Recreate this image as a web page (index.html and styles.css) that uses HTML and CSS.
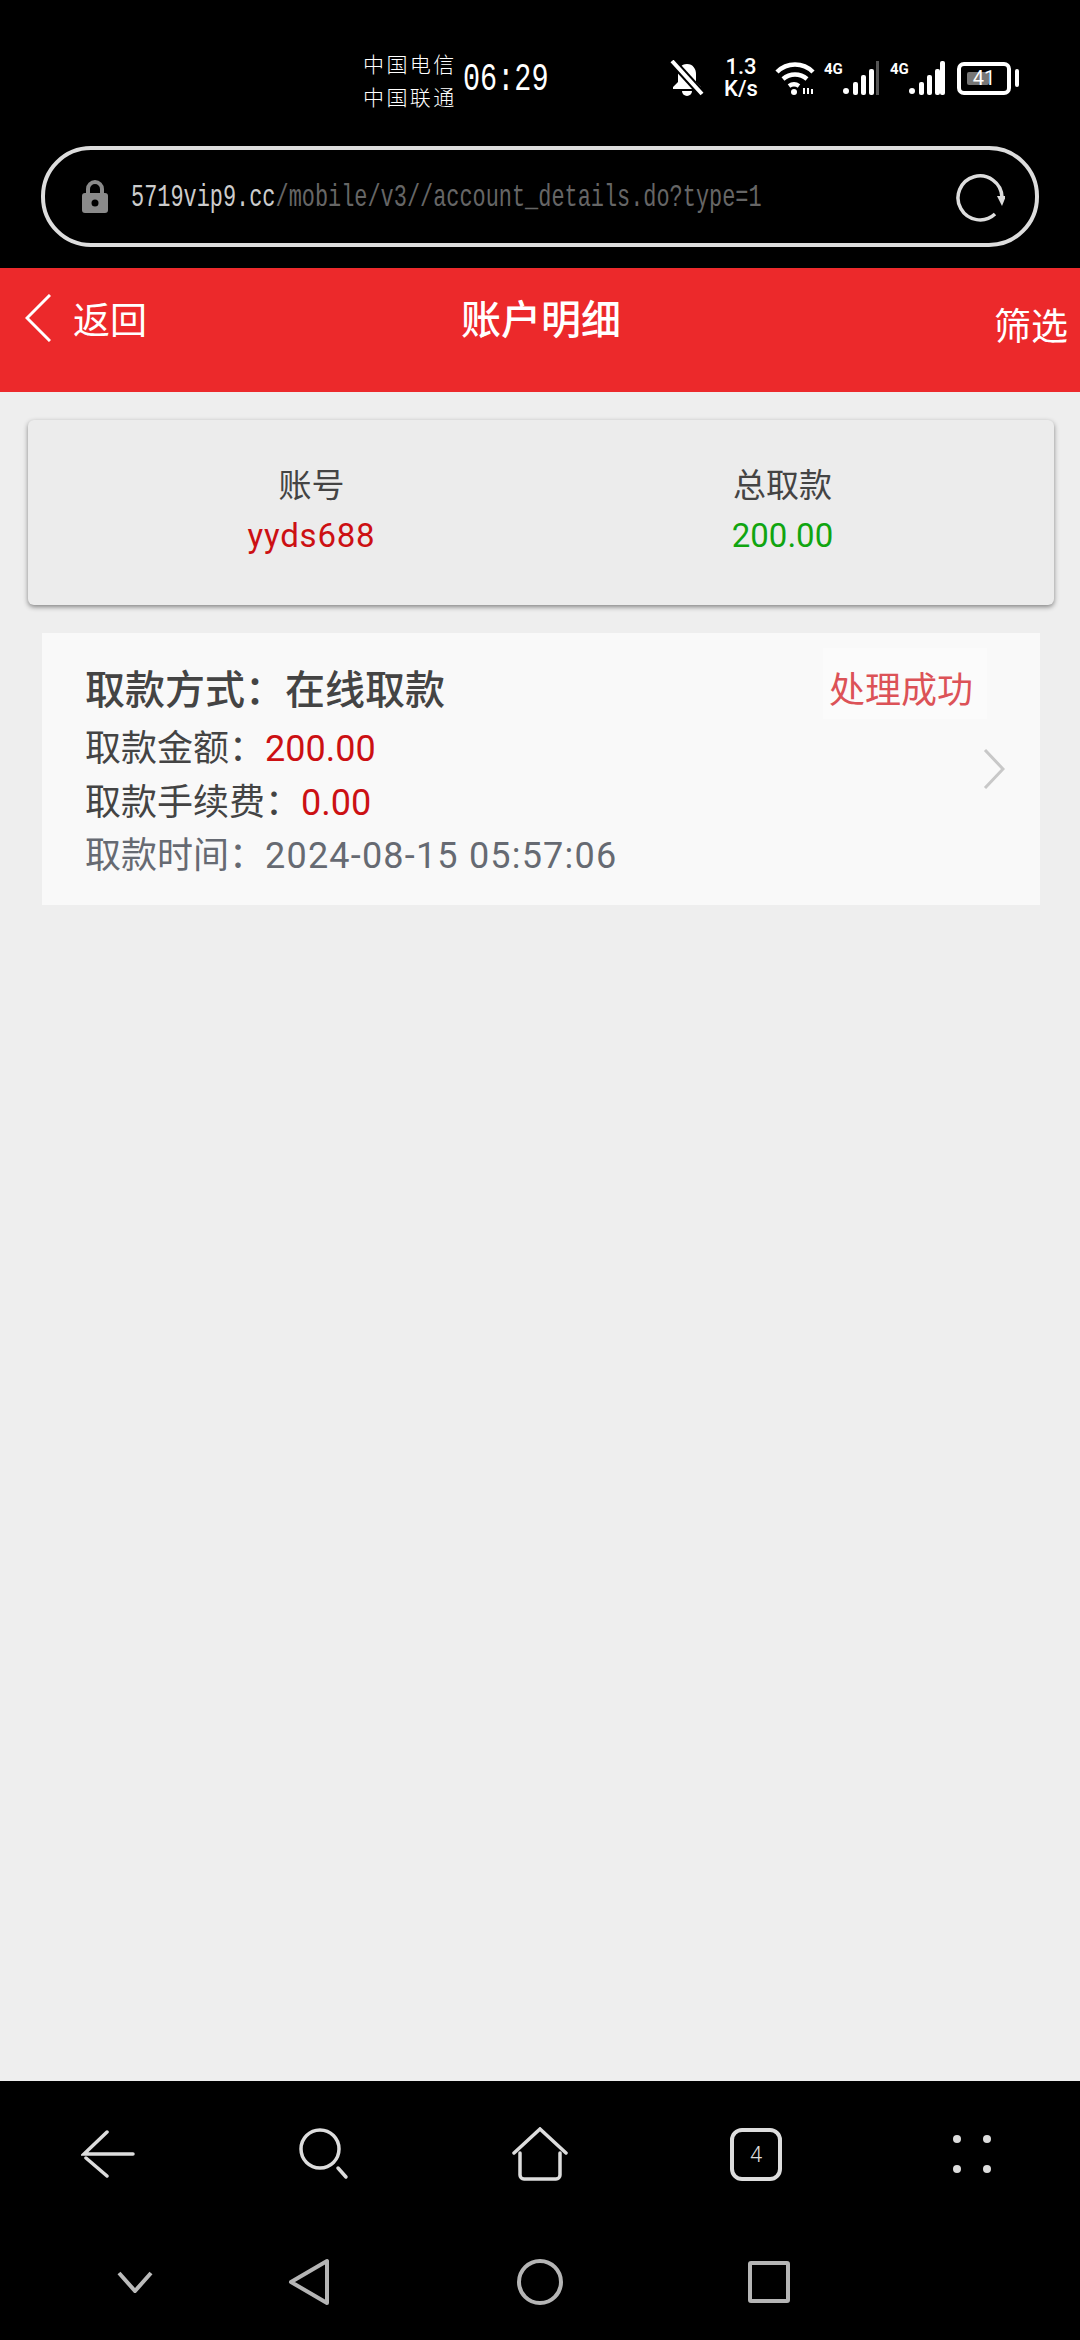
FILE: index.html
```html
<!DOCTYPE html>
<html lang="zh-CN">
<head>
    <meta charset="UTF-8">
    <meta name="viewport" content="width=device-width, initial-scale=1.0">
    <title>账户明细</title>
    <link rel="stylesheet" href="styles.css">
</head>
<body>
    <div class="browser-top">
        <div class="status-bar">
            <div class="carrier">
                <div>中国电信</div>
                <div>中国联通</div>
            </div>
            <div class="clock">06:29</div>
            <svg class="ic-bell" width="36" height="36" viewBox="0 0 36 36">
                <path d="M18 4c-6 0-9 5-9 10v8l-5 5v2h28v-2l-5-5v-8c0-5-3-10-9-10z" fill="#fff"/>
                <path d="M13 31a5 5 0 0 0 10 0z" fill="#fff"/>
                <path d="M3 1l30 33" stroke="#000" stroke-width="8"/>
                <path d="M3 1l30 33" stroke="#fff" stroke-width="4"/>
            </svg>
            <div class="speed"><div>1.3</div><div>K/s</div></div>
            <svg class="ic-wifi" width="40" height="34" viewBox="0 0 40 34">
                <g fill="none" stroke="#fff" stroke-width="4.5">
                    <path d="M2 11c10-10 26-10 36 0"/>
                    <path d="M8 18c7-6 17-6 24 0"/>
                    <path d="M14 25c3-2 7-2 10 0"/>
                </g>
                <circle cx="19" cy="31" r="3" fill="#fff"/>
                <path d="M29 33v-6M33 33v-6M37 33v-5" stroke="#fff" stroke-width="2"/>
            </svg>
            <div class="sim sim-first">
                <span class="net">4G</span>
                <svg width="36" height="34" viewBox="0 0 36 34">
                    <circle cx="3" cy="30" r="3" fill="#fff"/>
                    <rect x="10" y="21" width="5" height="13" rx="2" fill="#fff"/>
                    <rect x="18" y="14" width="5" height="20" rx="2" fill="#fff"/>
                    <rect x="26" y="8" width="5" height="26" rx="2" fill="#fff"/>
                    <rect x="33" y="0" width="3" height="34" fill="#555"/>
                </svg>
            </div>
            <div class="sim">
                <span class="net">4G</span>
                <svg width="36" height="34" viewBox="0 0 36 34">
                    <circle cx="3" cy="30" r="3" fill="#fff"/>
                    <rect x="10" y="21" width="5" height="13" rx="2" fill="#fff"/>
                    <rect x="18" y="14" width="5" height="20" rx="2" fill="#fff"/>
                    <rect x="26" y="8" width="5" height="26" rx="2" fill="#fff"/>
                    <rect x="31" y="0" width="5" height="34" rx="2" fill="#fff"/>
                </svg>
            </div>
            <div class="battery">
                <div class="battery-box"><div class="battery-fill"></div><span class="battery-num">41</span></div>
                <div class="battery-nub"></div>
            </div>
        </div>
        <div class="address-bar">
            <svg class="ic-lock" width="26" height="33" viewBox="0 0 26 33">
                <path d="M6 14V9a7 7 0 0 1 14 0v5" fill="none" stroke="#8a8a8a" stroke-width="4"/>
                <rect y="13" width="26" height="20" rx="3" fill="#8a8a8a"/>
                <circle cx="13" cy="23" r="3.5" fill="#000"/>
            </svg>
            <div class="url"><span class="url-host">5719vip9.cc</span>/mobile/v3//account_details.do?type=1</div>
            <svg class="ic-reload" width="50" height="50" viewBox="0 0 50 50">
                <path d="M40 41A22 22 0 1 1 47 24" fill="none" stroke="#ddd" stroke-width="3.5"/>
                <path d="M42 23h9l-4 10z" fill="#ddd"/>
            </svg>
        </div>
    </div>

    <div class="page-header">
        <div class="back">
            <svg width="26" height="48" viewBox="0 0 26 48"><path d="M25 1L2 24l23 23" fill="none" stroke="#fff" stroke-width="3"/></svg>
            <span>返回</span>
        </div>
        <div class="page-title">账户明细</div>
        <div class="filter">筛选</div>
    </div>

    <main class="content">
        <div class="summary">
            <div class="summary-col">
                <div class="summary-label">账号</div>
                <div class="summary-value summary-account red">yyds688</div>
            </div>
            <div class="summary-col">
                <div class="summary-label">总取款</div>
                <div class="summary-value green">200.00</div>
            </div>
        </div>

        <div class="record">
            <div class="record-top">
                <div class="record-title">取款方式&#xFF1A;在线取款</div>
                <div class="record-state">处理成功</div>
            </div>
            <div class="record-line">取款金额&#xFF1A;<span class="red">200.00</span></div>
            <div class="record-line">取款手续费&#xFF1A;<span class="red">0.00</span></div>
            <div class="record-line record-time">取款时间&#xFF1A;<span class="record-date">2024-08-15 05:57:06</span></div>
            <svg class="record-arrow" width="22" height="40" viewBox="0 0 22 40"><path d="M2 1l18 19L2 39" fill="none" stroke="#c8c8c8" stroke-width="3"/></svg>
        </div>
    </main>

    <div class="browser-bottom">
        <div class="toolbar">
            <svg width="54" height="48" viewBox="0 0 54 48"><g fill="none" stroke="#ddd" stroke-width="3.5" stroke-linecap="round"><path d="M26 2L3 24h49"/><path d="M5 28l21 18"/></g></svg>
            <svg width="50" height="52" viewBox="0 0 50 52"><circle cx="21" cy="21" r="19" fill="none" stroke="#ddd" stroke-width="3.5"/><path d="M39 40l8 9" stroke="#ddd" stroke-width="3.5" stroke-linecap="round"/></svg>
            <svg width="56" height="54" viewBox="0 0 56 54"><path d="M2 26L28 2l26 24M8 26v22a4 4 0 0 0 4 4h32a4 4 0 0 0 4-4V26" fill="none" stroke="#ddd" stroke-width="3.5" stroke-linecap="round"/></svg>
            <div class="tab-count">4</div>
            <svg width="38" height="38" viewBox="0 0 38 38"><g fill="#ddd"><circle cx="4" cy="4" r="4"/><circle cx="34" cy="4" r="4"/><circle cx="4" cy="34" r="4"/><circle cx="34" cy="34" r="4"/></g></svg>
        </div>
        <div class="navbar">
            <svg class="nav-down" width="36" height="22" viewBox="0 0 36 22"><path d="M2 2l16 18L34 2" fill="none" stroke="#bbb" stroke-width="4"/></svg>
            <svg class="nav-back" width="42" height="48" viewBox="0 0 42 48"><path d="M39 3v42L3 24z" fill="none" stroke="#b5b5b5" stroke-width="4" stroke-linejoin="round"/></svg>
            <svg class="nav-home" width="46" height="46" viewBox="0 0 46 46"><circle cx="23" cy="23" r="21" fill="none" stroke="#b5b5b5" stroke-width="4"/></svg>
            <div class="nav-recent"></div>
        </div>
    </div>
</body>
</html>
```

FILE: styles.css
```css
* {
    box-sizing: border-box;
}
html, body {
    margin: 0;
    height: 100%;
}
body {
    display: flex;
    flex-direction: column;
    height: 2340px;
    overflow: hidden;
    background-color: #eeeeee;
    font-family: Roboto, "Noto Sans CJK SC", sans-serif;
    color: #444;
}

/* phone status bar + browser address bar */
.browser-top {
    height: 268px;
    background-color: #000;
    color: #fff;
    padding-top: 50px;
}
.status-bar {
    display: flex;
    align-items: center;
    height: 56px;
    padding-left: 363px;
}
.carrier {
    width: 100px;
    padding-top: 3px;
    font-family: "Noto Sans CJK SC", serif;
    font-size: 21px;
    font-weight: 300;
    line-height: 33px;
    letter-spacing: 2.4px;
    white-space: nowrap;
}
.clock {
    width: 87px;
    padding-top: 2px;
    font-family: "Liberation Mono", monospace;
    font-size: 28.5px;
    transform: scaleY(1.35);
    text-align: left;
}
.ic-bell {
    margin-left: 119px;
}
.speed {
    margin-left: 15px;
    width: 42px;
    font-size: 22px;
    font-weight: 500;
    line-height: 22px;
    text-align: center;
}
.ic-wifi {
    margin-left: 13px;
}
.sim {
    display: flex;
    align-items: flex-start;
    margin-left: 11px;
}
.sim-first {
    margin-left: 9px;
}
.net {
    width: 19px;
    font-size: 15px;
    font-weight: 700;
    line-height: 16px;
    white-space: nowrap;
}
.battery {
    display: flex;
    align-items: center;
    margin-left: 12px;
}
.battery-box {
    position: relative;
    width: 54px;
    height: 33px;
    padding: 6px;
    border: 4px solid #fff;
    border-radius: 7px;
}
.battery-fill {
    width: 22px;
    height: 100%;
    background-color: #777;
    border-radius: 2px;
}
.battery-num {
    position: absolute;
    top: 0;
    left: 0;
    width: 100%;
    line-height: 25px;
    text-align: center;
    font-size: 20px;
}
.battery-nub {
    width: 4px;
    height: 18px;
    margin-left: 4px;
    background-color: #fff;
    border-radius: 2px;
}
.address-bar {
    display: flex;
    align-items: center;
    height: 101px;
    margin: 40px 41px 0;
    padding: 0 30px 0 37px;
    border: 4px solid #ddd;
    border-radius: 50px;
}
.ic-reload {
    margin-top: 2px;
}
.url {
    flex: 1;
    margin: 3px 0 0 23px;
    font-family: "Liberation Mono", monospace;
    font-size: 21.9px;
    color: #666;
    transform: scaleY(1.45);
    white-space: nowrap;
}
.url-host {
    color: #ccc;
}

/* red page header */
.page-header {
    position: relative;
    display: flex;
    justify-content: space-between;
    height: 124px;
    padding: 25px 12px 0 25px;
    background-color: #ec292b;
    color: #fff;
}
.back {
    display: flex;
    align-items: center;
    height: 50px;
    font-size: 37px;
}
.back span {
    margin-left: 22px;
}
.page-title {
    position: absolute;
    top: 25px;
    left: 1px;
    width: 100%;
    text-align: center;
    font-size: 40px;
    font-weight: 500;
    line-height: 56px;
}
.filter {
    margin-top: 10px;
    font-size: 37px;
    line-height: 50px;
}

/* page content */
.content {
    flex: 1;
    padding-top: 28px;
}
.summary {
    display: grid;
    grid-template-columns: 471px 471px;
    align-content: start;
    height: 185px;
    margin: 0 26px 0 28px;
    padding: 41px 0 0 48px;
    background-color: #ececec;
    border-radius: 6px;
    box-shadow: 0 2px 5px rgba(0, 0, 0, 0.45);
}
.summary-col {
    text-align: center;
}
.summary-label {
    font-size: 33px;
    line-height: 50px;
}
.summary-value {
    font-size: 33px;
    line-height: 50px;
}
.summary-account {
    letter-spacing: 0.8px;
}
.red {
    color: #cc1013;
}
.green {
    color: #10a510;
}
.record {
    position: relative;
    height: 272px;
    margin: 28px 40px 0 42px;
    padding: 30px 67px 0 43px;
    background-color: #f9f9f9;
}
.record-top {
    display: flex;
    justify-content: space-between;
    height: 58px;
    margin-bottom: 2px;
}
.record-title {
    font-size: 40px;
    font-weight: 500;
    line-height: 56px;
}
.record-state {
    height: 71px;
    margin: -15px -14px 0 -6px;
    padding: 15px 14px 0 6px;
    background-color: #fbfbfb;
    color: #dc5257;
    font-size: 36px;
    line-height: 56px;
}
.record-line {
    font-size: 36px;
    line-height: 53.5px;
}
.record-time {
    color: #666a72;
}
.record-date {
    letter-spacing: 1.2px;
}
.record-arrow {
    position: absolute;
    top: 116px;
    right: 35px;
}

/* browser toolbar + android nav */
.browser-bottom {
    height: 259px;
    background-color: #000;
}
.toolbar {
    display: grid;
    grid-template-columns: repeat(5, 216px);
    justify-items: center;
    align-items: center;
    height: 54px;
    margin-top: 46px;
}
.tab-count {
    width: 52px;
    height: 53px;
    border: 4px solid #ddd;
    border-radius: 12px;
    color: #ddd;
    font-size: 22px;
    font-weight: 300;
    line-height: 45px;
    text-align: center;
}
.navbar {
    display: flex;
    align-items: center;
    height: 48px;
    margin-top: 77px;
    padding-left: 117px;
}
.nav-back {
    margin-left: 135px;
}
.nav-home {
    margin-left: 187px;
}
.nav-recent {
    width: 42px;
    height: 42px;
    margin-left: 185px;
    border: 4px solid #b5b5b5;
    border-radius: 3px;
}
```
